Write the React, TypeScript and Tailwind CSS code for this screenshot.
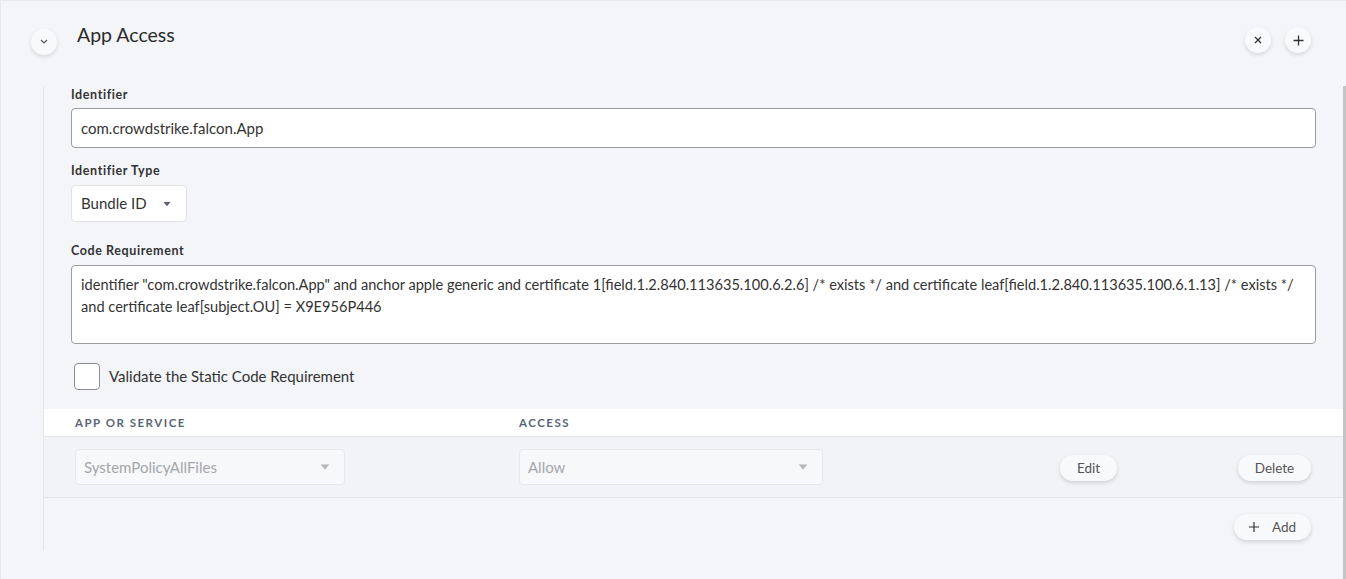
import React from 'react';

const font = { fontFamily: 'Lato, "Open Sans", sans-serif' };

function Caret({ className = '' }: { className?: string }) {
  return (
    <svg width="10" height="6" viewBox="0 0 10 6" className={className}>
      <path d="M0 0 L10 0 L5 6 Z" fill="currentColor" />
    </svg>
  );
}

function RoundButton({ children }: { children: React.ReactNode }) {
  return (
    <button className="w-[26px] h-[26px] rounded-full bg-[#f8f9fb] shadow-[0_2px_4px_rgba(0,0,0,0.12)] flex items-center justify-center text-[#333]">
      {children}
    </button>
  );
}

function PillButton({ children, className = '' }: { children: React.ReactNode; className?: string }) {
  return (
    <button
      className={`h-[26px] rounded-full bg-[#f8f9fb] shadow-[0_2px_4px_rgba(0,0,0,0.14)] flex items-center justify-center text-[13.5px] text-[#555] ${className}`}
    >
      {children}
    </button>
  );
}

export default function App() {
  return (
    <div
      className="relative w-[1346px] h-[579px] overflow-hidden bg-[#f4f5f9] border-t border-l border-[#e6e8ee] text-[#333]"
      style={font}
    >
      {/* scrollbar thumb */}
      <div className="absolute right-0 top-[85px] bottom-0 w-[3px] bg-[#c4c4c4]" />

      {/* Header */}
      <header className="flex items-start pt-[20px] pl-[30px] pr-[35px]">
        <div className="mt-[8px]">
          <RoundButton>
            <svg width="10" height="6" viewBox="0 0 10 6" fill="none" stroke="#555" strokeWidth="1.2">
              <path d="M2 1 L5 4 L8 1" />
            </svg>
          </RoundButton>
        </div>
        <h1 className="ml-[20px] text-[19.5px] leading-[30px] text-[#2b2b2b] -mt-[1px]">App Access</h1>
        <div className="ml-auto flex gap-[14px] mt-[6px]">
          <RoundButton>
            <svg width="10" height="10" viewBox="0 0 10 10" stroke="#333" strokeWidth="1.3">
              <path d="M2 2 L8 8 M8 2 L2 8" />
            </svg>
          </RoundButton>
          <RoundButton>
            <svg width="11" height="11" viewBox="0 0 11 11" stroke="#333" strokeWidth="1.3">
              <path d="M5.5 0.5 V10.5 M0.5 5.5 H10.5" />
            </svg>
          </RoundButton>
        </div>
      </header>

      {/* Body */}
      <div className="ml-[42px] mt-[32px] w-[1300px] border-l border-[#e2e4ea] h-[463px]">
        <div className="pl-[27px] pr-[27px]">
          <label className="block text-[12.5px] font-bold tracking-[0.6px] text-[#333] leading-[16px]">Identifier</label>
          <div className="mt-[5px] h-[40px] rounded-[4px] border border-[#9a9ca0] bg-white flex items-center px-[9px] text-[15px] text-[#333]">
            com.crowdstrike.falcon.App
          </div>

          <label className="block mt-[15px] text-[12.5px] font-bold tracking-[0.6px] text-[#333] leading-[16px]">
            Identifier Type
          </label>
          <div className="mt-[6px] w-[116px] h-[37px] rounded-[4px] border border-[#e1e3e8] bg-white flex items-center pl-[9px] pr-[14px] text-[15px] text-[#333]">
            <span>Bundle ID</span>
            <Caret className="ml-auto text-[#5c6270] scale-75" />
          </div>

          <label className="block mt-[21px] text-[12.5px] font-bold tracking-[0.6px] text-[#333] leading-[16px]">
            Code Requirement
          </label>
          <div className="mt-[6px] h-[79px] rounded-[4px] border border-[#9a9ca0] bg-white px-[9px] pt-[8px] text-[14.6px] leading-[22px] text-[#333]">
            identifier "com.crowdstrike.falcon.App" and anchor apple generic and certificate 1[field.1.2.840.113635.100.6.2.6] /* exists */ and certificate leaf[field.1.2.840.113635.100.6.1.13] /* exists */ and certificate leaf[subject.OU] = X9E956P446
          </div>

          <div className="mt-[19px] flex items-center">
            <div className="ml-[3px] w-[26px] h-[27px] rounded-[4px] border border-[#8a8c90] bg-white" />
            <span className="ml-[9px] text-[15px] text-[#333]">Validate the Static Code Requirement</span>
          </div>
        </div>

        {/* Table */}
        <div className="mt-[19px]">
          <div className="h-[28px] bg-white border-b border-[#e3e6ec] flex items-center text-[11.5px] font-bold tracking-[1.5px] text-[#5b6577]">
            <div className="w-[475px] pl-[31px]">APP OR SERVICE</div>
            <div>ACCESS</div>
          </div>
          <div className="h-[61px] bg-[#f1f3f7] border-b border-[#e3e6ec] flex items-center">
            <div className="w-[475px] pl-[31px]">
              <div className="w-[270px] h-[36px] rounded-[4px] border border-[#e6e8ec] bg-[#f7f8fa] flex items-center pl-[8px] pr-[14px] text-[15px] text-[#a4a6aa]">
                <span>SystemPolicyAllFiles</span>
                <Caret className="ml-auto text-[#b4b6ba] scale-90" />
              </div>
            </div>
            <div className="w-[304px] h-[36px] rounded-[4px] border border-[#e6e8ec] bg-[#f7f8fa] flex items-center pl-[8px] pr-[14px] text-[15px] text-[#a4a6aa]">
              <span>Allow</span>
              <Caret className="ml-auto text-[#b4b6ba] scale-90" />
            </div>
            <PillButton className="ml-[237px] w-[57px] mt-[2px]">Edit</PillButton>
            <PillButton className="ml-[121px] w-[73px] mt-[2px]">Delete</PillButton>
          </div>
          <div className="flex justify-end pr-[32px] pt-[16px]">
            <PillButton className="w-[77px] gap-[13px] text-[#333]">
              <svg width="10" height="10" viewBox="0 0 10 10" stroke="#333" strokeWidth="1.2">
                <path d="M5 0 V10 M0 5 H10" />
              </svg>
              <span>Add</span>
            </PillButton>
          </div>
        </div>
      </div>
    </div>
  );
}
